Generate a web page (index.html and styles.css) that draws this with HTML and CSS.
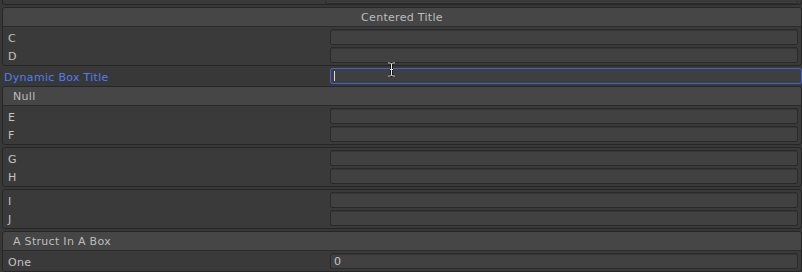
FILE: index.html
```html
<!DOCTYPE html>
<html lang="en">
<head>
    <meta charset="UTF-8">
    <title>Inspector</title>
    <link rel="stylesheet" href="styles.css">
</head>
<body>
    <div class="inspector">
        <div class="box cut">
            <div class="row"><span class="label"></span><span class="field stub"></span></div>
        </div>

        <div class="box">
            <div class="box-header centered">Centered Title</div>
            <div class="box-body">
                <div class="row"><span class="label">C</span><span class="field"></span></div>
                <div class="row"><span class="label">D</span><span class="field"></span></div>
            </div>
        </div>

        <div class="row loose">
            <span class="label focused">Dynamic Box Title</span>
            <span class="field active"><span class="caret"></span></span>
        </div>

        <div class="box">
            <div class="box-header">Null</div>
            <div class="box-body">
                <div class="row"><span class="label">E</span><span class="field"></span></div>
                <div class="row"><span class="label">F</span><span class="field"></span></div>
            </div>
        </div>

        <div class="box">
            <div class="box-body">
                <div class="row"><span class="label">G</span><span class="field"></span></div>
                <div class="row"><span class="label">H</span><span class="field"></span></div>
            </div>
        </div>

        <div class="box">
            <div class="box-body">
                <div class="row"><span class="label">I</span><span class="field"></span></div>
                <div class="row"><span class="label">J</span><span class="field"></span></div>
            </div>
        </div>

        <div class="box">
            <div class="box-header">A Struct In A Box</div>
            <div class="box-body">
                <div class="row"><span class="label">One</span><span class="field">0</span></div>
            </div>
        </div>
    </div>

    <!-- mouse pointer over the focused field -->
    <svg class="ibeam" width="9" height="15" viewBox="0 0 9 15">
        <path d="M1 1h2.5l1 1 1-1H8M4.5 2v11M1 14h2.5l1-1 1 1H8M3 7.5h3" fill="none" stroke="#111" stroke-width="2.4"/>
        <path d="M1 1h2.5l1 1 1-1H8M4.5 2v11M1 14h2.5l1-1 1 1H8M3 7.5h3" fill="none" stroke="#e8e8e8" stroke-width="1"/>
    </svg>
</body>
</html>
```

FILE: styles.css
```css
* {
    margin: 0;
    padding: 0;
    box-sizing: border-box;
}

body {
    background-color: #383838;
    color: #c4c4c4;
    font-family: 'DejaVu Sans', Verdana, sans-serif;
    font-size: 11px;
    letter-spacing: 0.3px;
    width: 802px;
    height: 272px;
    overflow: hidden;
    position: relative;
}

.inspector {
    display: flex;
    flex-direction: column;
    gap: 2px;
    padding-left: 2px;
}

.box {
    background-color: #3a3a3a;
    border: 1px solid #262626;
    border-radius: 3px;
}

.box.cut {
    height: 5px;
    border-top: none;
    border-radius: 0 0 3px 3px;
    overflow: hidden;
    display: flex;
    align-items: flex-end;
    padding-right: 3px;
}

.box.cut .row {
    flex: 1;
    height: 3px;
    align-items: flex-end;
}

.field.stub {
    height: 3px;
    border-top: none;
    border-radius: 0 0 2px 2px;
}

.box-header {
    height: 19px;
    line-height: 20px;
    padding-left: 10px;
    background-color: #464646;
    border-bottom: 1px solid #2b2b2b;
    border-radius: 2px 2px 0 0;
    color: #bdbdbd;
}

.box-header.centered {
    text-align: center;
    padding-left: 0;
}

.box-body {
    display: flex;
    flex-direction: column;
    gap: 2px;
    padding: 2px 3px 2px 5px;
}

.row {
    display: flex;
    height: 16px;
    align-items: flex-start;
}

.row.loose {
    margin-left: -2px;
    padding-left: 4px;
}

.label {
    width: 322px;
    height: 16px;
    flex: none;
    line-height: 20px;
    white-space: nowrap;
}

.row.loose .label {
    width: 326px;
}

.label.focused {
    color: #4f7ff2;
}

.field {
    flex: 1;
    height: 16px;
    background-color: #414141;
    border: 1px solid #2a2a2a;
    border-radius: 2px;
    box-shadow: inset 0 1px 0 #363636;
    padding-left: 3px;
    line-height: 16px;
    color: #c4c4c4;
}

.field.active {
    border-color: #3c62d6;
    background-color: #3f3f3f;
    box-shadow: none;
    display: flex;
    align-items: center;
}

.caret {
    width: 1px;
    height: 10px;
    background-color: #d8d8d8;
}

.ibeam {
    position: absolute;
    left: 387px;
    top: 62px;
}
```
